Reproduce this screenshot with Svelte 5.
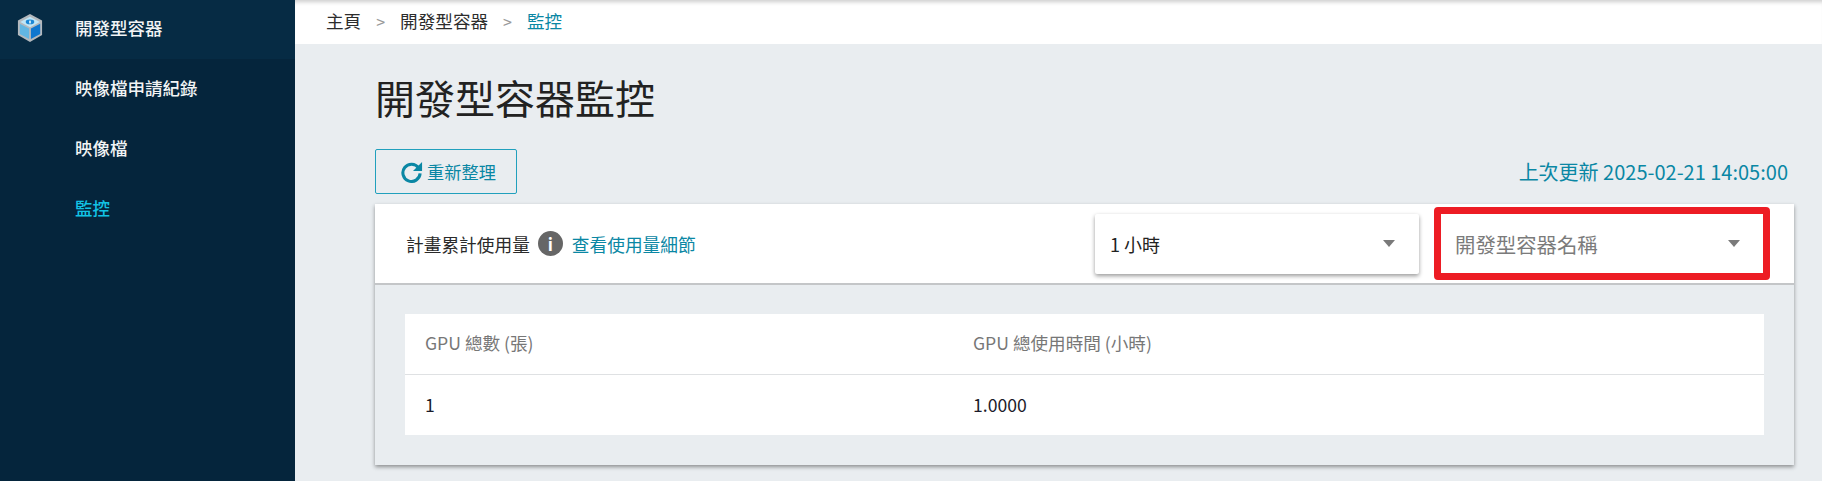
<script>
    let menu = [
        { label: '開發型容器', head: true },
        { label: '映像檔申請紀錄' },
        { label: '映像檔' },
        { label: '監控', active: true }
    ]
    let crumbs = ['主頁', '開發型容器']
</script>

<div class="page">
    <aside class="sidebar">
        {#each menu as item}
            <div class="item" class:head={item.head} class:active={item.active}>
                {#if item.head}
                    <svg class="logo" viewBox="0 0 28 32" width="26" height="28" preserveAspectRatio="none">
                        <polygon points="14,0 27,7.5 27,24 14,32 1,24 1,7.5" fill="#b4b9bd"/>
                        <polygon points="14,3 24.5,9 14,15 3.5,9" fill="#bfe6f7"/>
                        <polygon points="3,11 13,16.5 13,28.5 3,22.8" fill="#62b6e2"/>
                        <polygon points="25,11 15,16.5 15,28.5 25,22.8" fill="#0f77cf"/>
                        <ellipse cx="14" cy="9" rx="4.6" ry="2.6" fill="#1b87d6"/>
                        <ellipse cx="14" cy="9" rx="1" ry="2" fill="#dff3fb"/>
                    </svg>
                {/if}
                <span>{item.label}</span>
            </div>
        {/each}
    </aside>

    <main class="content">
        <nav class="breadcrumb">
            {#each crumbs as c}
                <span>{c}</span><span class="sep">&gt;</span>
            {/each}
            <span class="current">監控</span>
        </nav>

        <section class="body">
            <h1>開發型容器監控</h1>

            <div class="toolbar">
                <button class="refresh">
                    <svg viewBox="0 0 24 24" width="23" height="23">
                        <path d="M19.4 8.2A9 9 0 1 0 21 14" fill="none" stroke="#0a87a4" stroke-width="3.2"/>
                        <polygon points="23,2 23,11.4 13.6,11.4" fill="#0a87a4"/>
                    </svg>
                    重新整理
                </button>
                <span class="updated">上次更新 2025-02-21 14:05:00</span>
            </div>

            <div class="card">
                <div class="card-head">
                    <span>計畫累計使用量</span>
                    <span class="info">i</span>
                    <span class="link">查看使用量細節</span>
                    <div class="selects">
                        <div class="select">
                            <span>1 小時</span>
                            <i class="arrow"></i>
                        </div>
                        <div class="select named">
                            <span>開發型容器名稱</span>
                            <i class="arrow"></i>
                        </div>
                    </div>
                </div>
                <div class="card-body">
                    <div class="table">
                        <div class="row th">
                            <div>GPU 總數 (張)</div>
                            <div>GPU 總使用時間 (小時)</div>
                        </div>
                        <div class="row">
                            <div>1</div>
                            <div>1.0000</div>
                        </div>
                    </div>
                </div>
            </div>
        </section>
    </main>
</div>

<style>
    :global(body) {
        margin: 0;
        background: #e9edf0;
        font-family: "Noto Sans CJK TC", "Noto Sans", sans-serif;
    }

    .page {
        display: flex;
        height: 481px;
        overflow: hidden;
    }

    .sidebar {
        width: 295px;
        flex: none;
        background: #05253c;
        color: #f2f4f5;
        font-size: 17.5px;
        font-weight: 500;
    }

    .item {
        height: 60px;
        box-sizing: border-box;
        padding: 0 0 4px 75px;
        display: flex;
        align-items: center;
        position: relative;
    }

    .item.head {
        height: 59px;
        background: #062b44;
    }

    .item.active {
        color: #12c2e4;
    }

    .logo {
        position: absolute;
        left: 17px;
        top: 14px;
    }

    .content {
        flex: 1;
        min-width: 0;
    }

    .breadcrumb {
        height: 44px;
        box-sizing: border-box;
        background: #fff;
        display: flex;
        align-items: center;
        padding: 0 0 3px 31px;
        font-size: 17.6px;
        color: #2c2c2c;
        box-shadow: inset 0 5px 4px -3px rgba(0, 0, 0, 0.2);
    }

    .sep {
        color: #9a9a9a;
        margin: 0 15px;
        font-size: 16px;
    }

    .current {
        color: #0a87a4;
    }

    .body {
        padding: 0 28px 0 80px;
    }

    h1 {
        margin: 0;
        padding-top: 29px;
        height: 105px;
        box-sizing: border-box;
        font-size: 40px;
        line-height: 49px;
        font-weight: 400;
        color: #222;
    }

    .toolbar {
        display: flex;
        justify-content: space-between;
        align-items: center;
        height: 45px;
        margin-bottom: 10px;
    }

    .refresh {
        width: 142px;
        height: 45px;
        padding: 0 0 0 4px;
        display: flex;
        align-items: center;
        justify-content: center;
        gap: 4px;
        background: transparent;
        border: 1px solid #20a0bd;
        border-radius: 2px;
        color: #0a87a4;
        font: inherit;
        font-size: 17.2px;
    }

    .updated {
        color: #0a87a4;
        font-size: 20px;
        margin-right: 6px;
    }

    .card {
        width: 1419px;
        height: 261px;
        box-shadow: 0 2px 4px rgba(0, 0, 0, 0.4);
        background: #e9edf0;
    }

    .card-head {
        height: 79px;
        background: #fff;
        border-bottom: 2px solid #c4c6c8;
        display: flex;
        align-items: center;
        padding-left: 31px;
        font-size: 17.7px;
        color: #2a2a2a;
    }

    .info {
        width: 25px;
        height: 25px;
        border-radius: 50%;
        background: #666;
        color: #fff;
        margin: 0 9px 0 8px;
        display: flex;
        align-items: center;
        justify-content: center;
        font-size: 17px;
        font-weight: 700;
    }

    .link {
        color: #0a87a4;
    }

    .selects {
        margin-left: auto;
        margin-right: 24px;
        display: flex;
        align-items: center;
        gap: 15px;
    }

    .select {
        width: 324px;
        height: 60px;
        box-sizing: border-box;
        padding: 0 24px 0 15px;
        display: flex;
        align-items: center;
        justify-content: space-between;
        background: #fff;
        border-radius: 2px;
        box-shadow: 0 2px 4px rgba(0, 0, 0, 0.4);
        font-size: 18px;
        color: #222;
    }

    .select.named {
        width: 336px;
        height: 73px;
        padding: 0 23px 0 14px;
        border: 7px solid #ed1c24;
        border-radius: 4px;
        box-shadow: none;
        font-size: 20.4px;
        color: #7b7b7b;
    }

    .arrow {
        width: 0;
        height: 0;
        border-left: 6.5px solid transparent;
        border-right: 6.5px solid transparent;
        border-top: 7px solid #7a7a7a;
    }

    .card-body {
        padding: 29px 30px;
    }

    .table {
        background: #fff;
        font-size: 17.6px;
        color: #1b1b2a;
    }

    .row {
        display: grid;
        grid-template-columns: 548px 1fr;
        height: 60px;
        box-sizing: border-box;
        padding: 0 0 1px 20px;
        align-items: center;
    }

    .row.th {
        color: #777;
        border-bottom: 1px solid #dfe1e3;
        height: 61px;
        padding-bottom: 4px;
    }
</style>
